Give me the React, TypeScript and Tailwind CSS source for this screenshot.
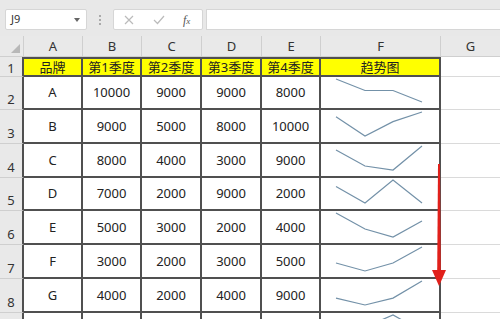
import React from 'react';

const font = { fontFamily: '"Noto Sans","Noto Sans CJK SC",sans-serif' };

const rows: [string, number, number, number, number][] = [
  ['A', 10000, 9000, 9000, 8000],
  ['B', 9000, 5000, 8000, 10000],
  ['C', 8000, 4000, 3000, 9000],
  ['D', 7000, 2000, 9000, 2000],
  ['E', 5000, 3000, 2000, 4000],
  ['F', 3000, 2000, 3000, 5000],
  ['G', 4000, 2000, 4000, 9000],
];

const heights = [33, 34, 34, 33, 34, 34, 34];

const Sparkline = ({ values, h }: { values: number[]; h: number }) => {
  const min = Math.min(...values);
  const max = Math.max(...values);
  const xs = [15, 44, 72, 101];
  const top = 2;
  const bottom = h - 6;
  const pts = values
    .map((v, i) => {
      const y = max === min ? (top + bottom) / 2 : bottom - ((v - min) / (max - min)) * (bottom - top);
      return `${xs[i]},${y.toFixed(1)}`;
    })
    .join(' ');
  return (
    <svg width="118" height={h} className="block">
      <polyline points={pts} fill="none" stroke="#7391a8" strokeWidth="1.2" />
    </svg>
  );
};

const colW = ['w-[59px]', 'w-[59px]', 'w-[60px]', 'w-[60px]', 'w-[59px]'];

const App = () => {
  return (
    <div className="relative w-[500px] h-[319px] overflow-hidden bg-white text-[#222]" style={font}>
      {/* formula bar */}
      <div className="flex items-center h-[36px] bg-[#e8e8e8] pt-[3px]">
        <div className="ml-[5px] w-[82px] h-[21px] bg-white border border-[#d6d6d6] rounded-[2px] flex items-center justify-between pl-[5px] pr-[6px]">
          <span className="text-[11px] text-[#333]">J9</span>
          <span className="w-0 h-0 border-l-[3px] border-r-[3px] border-t-[4px] border-l-transparent border-r-transparent border-t-[#666]" />
        </div>
        <div className="w-[26px] flex flex-col items-center gap-[2px]">
          <span className="w-[2px] h-[2px] bg-[#aaa]" />
          <span className="w-[2px] h-[2px] bg-[#aaa]" />
          <span className="w-[2px] h-[2px] bg-[#aaa]" />
        </div>
        <div className="w-[90px] h-[21px] bg-white border border-[#d6d6d6] rounded-[2px] flex items-center">
          <svg width="10" height="10" className="ml-[10px]" viewBox="0 0 10 10">
            <path d="M1 1 L9 9 M9 1 L1 9" stroke="#bbb" strokeWidth="1.2" />
          </svg>
          <svg width="12" height="10" className="ml-[19px]" viewBox="0 0 12 10">
            <path d="M1 5 L4.5 8.5 L11 1" stroke="#bbb" strokeWidth="1.2" fill="none" />
          </svg>
          <span className="ml-[18px] text-[12px] italic text-[#555]" style={{ fontFamily: '"Liberation Serif",serif' }}>
            f<span className="text-[9px]">x</span>
          </span>
        </div>
        <div className="ml-[3px] flex-1 h-[21px] bg-white border border-[#d6d6d6] border-r-0" />
      </div>

      {/* column headers */}
      <div className="flex h-[21px] bg-[#e9e9e9] text-[13px] text-[#333]">
        <div className="w-[24px] border-r border-b border-[#cfcfcf] flex items-end justify-end pr-[3px] pb-[3px]">
          <svg width="9" height="9" viewBox="0 0 9 9" className="block">
            <path d="M9 0 L9 9 L0 9 Z" fill="#b8b8b8" />
          </svg>
        </div>
        {['A', 'B', 'C', 'D', 'E'].map((c, i) => (
          <div key={c} className={`${colW[i]} border-r border-b border-[#cfcfcf] flex items-center justify-center leading-none`}>
            {c}
          </div>
        ))}
        <div className="w-[120px] border-r border-b border-[#cfcfcf] flex items-center justify-center leading-none">F</div>
        <div className="flex-1 border-b border-[#cfcfcf] flex items-center justify-center leading-none">G</div>
      </div>

      {/* row 1 */}
      <div className="flex h-[20px] text-[13px]">
        <div className="w-[24px] bg-[#e9e9e9] border-r-2 border-r-[#505050] border-b border-b-[#cfcfcf] flex items-end justify-center text-[#333] leading-none pb-[1px]">
          1
        </div>
        {['品牌', '第1季度', '第2季度', '第3季度', '第4季度'].map((t, i) => (
          <div key={t} className={`${colW[i]} bg-[#ffff00] border-t-2 border-r-2 border-b-2 border-[#505050] flex items-center justify-center leading-none`}>
            {t}
          </div>
        ))}
        <div className="w-[120px] bg-[#ffff00] border-t-2 border-r-2 border-b-2 border-[#505050] flex items-center justify-center leading-none">
          趋势图
        </div>
        <div className="flex-1 border-b border-[#dadada]" />
      </div>

      {/* data rows */}
      {rows.map((r, ri) => {
        const h = heights[ri];
        return (
          <div key={r[0]} className="flex text-[13px]" style={{ height: h }}>
            <div className="w-[24px] bg-[#e9e9e9] border-r-2 border-r-[#505050] border-b border-b-[#cfcfcf] flex items-end justify-center text-[#333] leading-none pb-[3px]">
              {ri + 2}
            </div>
            {r.map((v, i) => (
              <div key={i} className={`${colW[i]} border-r-2 border-b-2 border-[#505050] flex items-center justify-center leading-none`}>
                {v}
              </div>
            ))}
            <div className="w-[120px] border-r-2 border-b-2 border-[#505050]">
              <Sparkline values={r.slice(1) as number[]} h={h - 2} />
            </div>
            <div className="flex-1 border-b border-[#dadada]" />
          </div>
        );
      })}

      {/* row 9, cut off by the window edge */}
      <div className="flex h-[34px]">
        <div className="w-[24px] bg-[#e9e9e9] border-r-2 border-r-[#505050]" />
        {colW.map((w, i) => (
          <div key={i} className={`${w} border-r-2 border-[#505050]`} />
        ))}
        <div className="w-[120px] border-r-2 border-[#505050]">
          <Sparkline values={[3000, 6000, 9000, 5000]} h={32} />
        </div>
        <div className="flex-1" />
      </div>

      {/* red arrow overlay */}
      <svg className="absolute left-0 top-0 pointer-events-none" width="500" height="319">
        <path d="M438 164 L440 164 L440.8 272 L437.2 272 Z" fill="#e1201b" />
        <path d="M432 270 L446 270 L439 286 Z" fill="#e1201b" />
      </svg>
    </div>
  );
};

export default App;
